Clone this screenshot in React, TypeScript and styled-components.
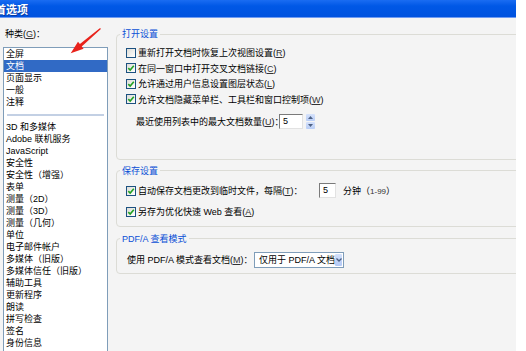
import styled, { createGlobalStyle } from 'styled-components'

const GlobalStyle = createGlobalStyle`
  html, body {
    margin: 0;
    padding: 0;
    background: #fff;
  }
  body {
    font-family: "Liberation Sans", "Noto Sans CJK SC", sans-serif;
  }
`

const Window = styled.div`
  position: relative;
  width: 516px;
  height: 351px;
  overflow: hidden;
  background: #f4f4f4;
  display: flex;
  flex-direction: column;
  font-size: 9px;
  color: #000;
`

const TitleBar = styled.div`
  flex: none;
  height: 17px;
  display: flex;
  align-items: center;
  border-bottom: 1px solid #6f9bf2;
  background: linear-gradient(#1a6cf2, #0058e6 35%, #0052df);
`

const Title = styled.span`
  margin-left: -5px;
  color: #fff;
  font-size: 11px;
  font-weight: bold;
  text-shadow: 1px 1px 0 #0b3a9e;
`

const Body = styled.div`
  flex: 1;
  min-height: 0;
  display: flex;
  padding-left: 3px;
`

const Sidebar = styled.div`
  flex: none;
  width: 105px;
  display: flex;
  flex-direction: column;
`

const CategoryLabel = styled.div`
  margin: 10px 0 7px 2px;
  line-height: 12px;
`

const ListBox = styled.ul`
  flex: 1;
  margin: 0;
  padding: 0;
  list-style: none;
  background: #fff;
  border: 1px solid #7f9db9;
  border-bottom: none;
`

const ListItem = styled.li<{ $selected?: boolean }>`
  height: 12px;
  line-height: 12px;
  padding-left: 2px;
  white-space: nowrap;
  background: ${({ $selected }) => ($selected ? '#316ac5' : 'transparent')};
  color: ${({ $selected }) => ($selected ? '#fff' : '#000')};
`

const ListSeparator = styled.li`
  height: 13px;
  display: flex;
  align-items: center;

  &::before {
    content: '';
    flex: 1;
    height: 2px;
    margin: 0 3px;
    background: #c3d0e4;
  }
`

const Main = styled.div`
  flex: none;
  width: 430px;
  margin-left: 8px;
  padding-top: 10px;
  display: flex;
  flex-direction: column;
`

const Group = styled.fieldset<{ $gap?: number }>`
  margin: ${({ $gap }) => $gap ?? 0}px 0 0 0;
  padding: 0;
  min-width: 0;
  border: 1px solid #dcdcd6;
  border-radius: 4px;
`

const Legend = styled.legend`
  margin-left: 3px;
  padding: 0 2px;
  line-height: 12px;
  color: #0b50d6;
`

const GroupContent = styled.div<{ $top: number; $bottom: number }>`
  padding: ${({ $top, $bottom }) => `${$top}px 0 ${$bottom}px 9px`};
  display: flex;
  flex-direction: column;
`

const Row = styled.div<{ $h: number; $mt?: number }>`
  height: ${({ $h }) => $h}px;
  margin-top: ${({ $mt }) => $mt ?? 0}px;
  display: flex;
  align-items: center;
  white-space: nowrap;
`

const Box = styled.span`
  flex: none;
  width: 10px;
  height: 10px;
  box-sizing: border-box;
  margin-right: 2px;
  border: 1px solid #1c5180;
  background: linear-gradient(135deg, #dcdcd7, #fff);
  display: flex;
  align-items: center;
  justify-content: center;
`

const Label = styled.span<{ $w?: number; $ml?: number }>`
  flex: none;
  width: ${({ $w }) => ($w ? `${$w}px` : 'auto')};
  margin-left: ${({ $ml }) => $ml ?? 0}px;
`

const Small = styled.span`
  font-size: 8px;
  color: #333;
`

const Field = styled.span<{ $w: number }>`
  flex: none;
  width: ${({ $w }) => $w}px;
  height: 15px;
  box-sizing: border-box;
  padding-left: 3px;
  line-height: 13px;
  background: #fff;
  border: 1px solid;
  border-color: #7a7a7a #e2e2e2 #e2e2e2 #7a7a7a;
`

const Spinner = styled.span`
  flex: none;
  width: 9px;
  height: 15px;
  margin-left: 3px;
  display: flex;
  flex-direction: column;
  gap: 1px;
`

const SpinHalf = styled.span`
  flex: 1;
  border-radius: 1px;
  background: linear-gradient(#d6e2fb, #b8cdf6);
  display: flex;
  align-items: center;
  justify-content: center;
`

const Select = styled.span`
  flex: none;
  width: 90px;
  height: 16px;
  box-sizing: border-box;
  display: flex;
  align-items: center;
  background: #fff;
  border: 1px solid #7f9db9;
`

const SelectText = styled.span`
  flex: 1;
  padding-left: 4px;
`

const DropButton = styled.span`
  width: 11px;
  height: 12px;
  margin-right: 1px;
  border-radius: 1px;
  background: linear-gradient(#d4e1fb, #b2c8f5);
  display: flex;
  align-items: center;
  justify-content: center;
`

const Arrow = styled.svg`
  position: absolute;
  left: 0;
  top: 0;
  pointer-events: none;
`

const Check = ({ checked }: { checked?: boolean }) => (
  <Box>
    {checked && (
      <svg width="8" height="8" viewBox="0 0 8 8">
        <path d="M1.3 4.1 L3.2 6 L6.8 1.8" fill="none" stroke="#21a121" strokeWidth="1.6" />
      </svg>
    )}
  </Box>
)

const Key = styled.u`
  color: #333;
`

const categoriesTop = ['全屏', '文档', '页面显示', '一般', '注释']
const categoriesRest = [
  '3D 和多媒体',
  'Adobe 联机服务',
  'JavaScript',
  '安全性',
  '安全性（增强）',
  '表单',
  '测量（2D）',
  '测量（3D）',
  '测量（几何）',
  '单位',
  '电子邮件帐户',
  '多媒体（旧版）',
  '多媒体信任（旧版）',
  '辅助工具',
  '更新程序',
  '朗读',
  '拼写检查',
  '签名',
  '身份信息',
]

const openOptions = [
  { text: '重新打开文档时恢复上次视图设置', key: 'R', checked: false },
  { text: '在同一窗口中打开交叉文档链接', key: 'C', checked: true },
  { text: '允许通过用户信息设置图层状态', key: 'L', checked: true },
  { text: '允许文档隐藏菜单栏、工具栏和窗口控制项', key: 'W', checked: true },
]

export default function App() {
  return (
    <>
      <GlobalStyle />
      <Window>
        <TitleBar>
          <Title>首选项</Title>
        </TitleBar>
        <Body>
          <Sidebar>
            <CategoryLabel>
              种类(<Key>G</Key>)：
            </CategoryLabel>
            <ListBox>
              {categoriesTop.map((c) => (
                <ListItem key={c} $selected={c === '文档'}>
                  {c}
                </ListItem>
              ))}
              <ListSeparator />
              {categoriesRest.map((c) => (
                <ListItem key={c}>{c}</ListItem>
              ))}
            </ListBox>
          </Sidebar>

          <Main>
            <Group>
              <Legend>打开设置</Legend>
              <GroupContent $top={5} $bottom={29.5}>
                {openOptions.map((o) => (
                  <Row key={o.key} $h={15.5}>
                    <Check checked={o.checked} />
                    <Label>
                      {o.text}(<Key>{o.key}</Key>)
                    </Label>
                  </Row>
                ))}
                <Row $h={15} $mt={7}>
                  <Label $w={143} $ml={10}>
                    最近使用列表中的最大文档数量(<Key>U</Key>)：
                  </Label>
                  <Field $w={24}>5</Field>
                  <Spinner>
                    <SpinHalf>
                      <svg width="5" height="3" viewBox="0 0 5 3">
                        <path d="M0 3 L2.5 0 L5 3 Z" fill="#4d6185" />
                      </svg>
                    </SpinHalf>
                    <SpinHalf>
                      <svg width="5" height="3" viewBox="0 0 5 3">
                        <path d="M0 0 L2.5 3 L5 0 Z" fill="#4d6185" />
                      </svg>
                    </SpinHalf>
                  </Spinner>
                </Row>
              </GroupContent>
            </Group>

            <Group $gap={5}>
              <Legend>保存设置</Legend>
              <GroupContent $top={6} $bottom={6}>
                <Row $h={16}>
                  <Check checked />
                  <Label $w={181}>
                    自动保存文档更改到临时文件，每隔(<Key>T</Key>)：
                  </Label>
                  <Field $w={17}>5</Field>
                  <Label $ml={7}>
                    分钟（<Small>1-99</Small>）
                  </Label>
                </Row>
                <Row $h={16} $mt={5}>
                  <Check checked />
                  <Label>
                    另存为优化快速 Web 查看(<Key>A</Key>)
                  </Label>
                </Row>
              </GroupContent>
            </Group>

            <Group $gap={6}>
              <Legend>PDF/A 查看模式</Legend>
              <GroupContent $top={7} $bottom={5}>
                <Row $h={16}>
                  <Label $w={127} $ml={1}>
                    使用 PDF/A 模式查看文档(<Key>M</Key>)：
                  </Label>
                  <Select>
                    <SelectText>仅用于 PDF/A 文档</SelectText>
                    <DropButton>
                      <svg width="6" height="4" viewBox="0 0 6 4">
                        <path d="M0.5 0.5 L3 3 L5.5 0.5" fill="none" stroke="#4d6185" strokeWidth="1.3" />
                      </svg>
                    </DropButton>
                  </Select>
                </Row>
              </GroupContent>
            </Group>
          </Main>
        </Body>

        <Arrow width="110" height="60" viewBox="0 0 110 60">
          <polygon
            points="100.1,28.0 79.9,44.0 78.0,41.7 70.7,53.3 83.6,48.7 81.7,46.4 100.9,29.0"
            fill="#e8221b"
          />
        </Arrow>
      </Window>
    </>
  )
}
